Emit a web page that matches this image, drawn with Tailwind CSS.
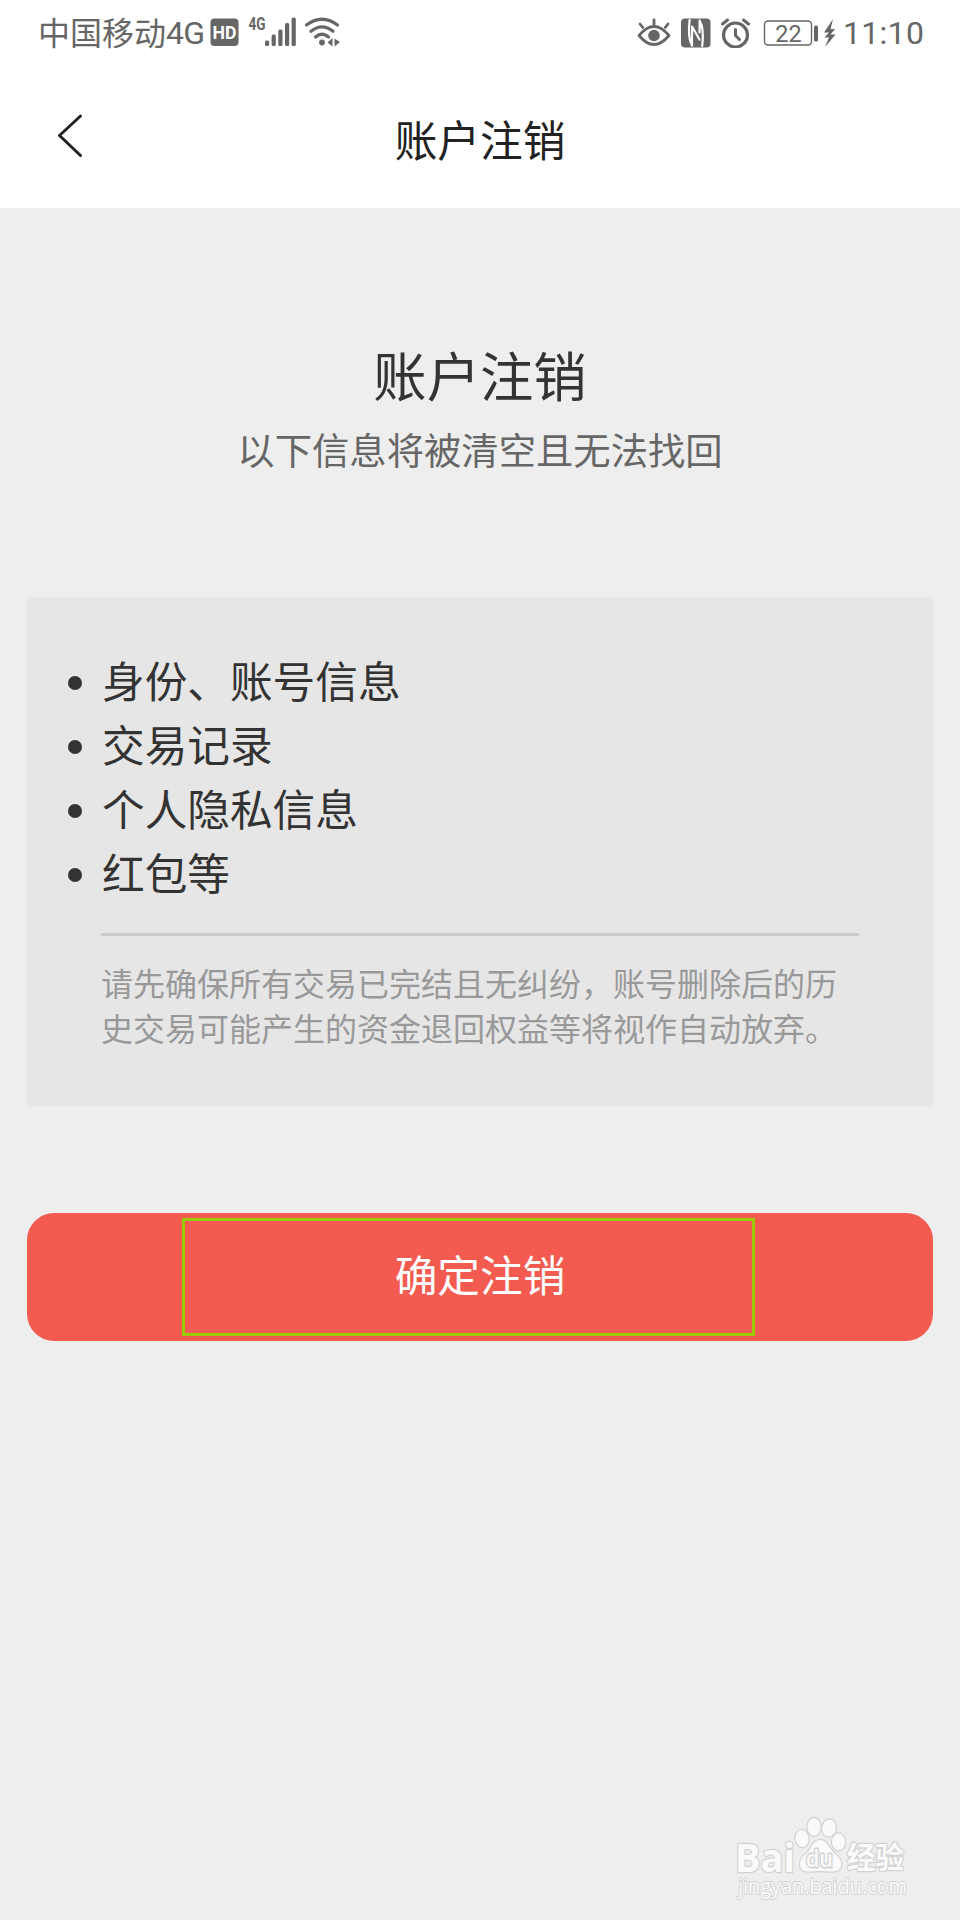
<!DOCTYPE html>
<html lang="zh-CN">
<head>
  <meta charset="UTF-8" />
  <meta name="viewport" content="width=device-width, initial-scale=1.0"/>
  <title>账户注销</title>
  <script src="https://cdn.jsdelivr.net/npm/@tailwindcss/browser@4"></script>
</head>
<body class="relative w-[960px] h-[1920px] overflow-hidden bg-[#eeeeee] text-[#333333] font-['Noto_Sans_CJK_SC',sans-serif]">

  <!-- Status bar -->
  <div class="flex items-center justify-between h-[66px] pl-[38px] pr-[38px] bg-white text-[#666666]">
    <div class="flex items-center">
      <div class="flex items-center h-[62px] pb-[3px] text-[32px] leading-[59px]">
        <span class="w-32">中国移动</span><span class="w-[39px] pt-[3px] font-['Roboto',sans-serif] tracking-[-0.8px]">4G</span>
      </div>
      <!-- HD, signal, wifi -->
      <svg class="ml-[5px] overflow-visible" width="130" height="30" viewBox="0 0 130 30" fill="#666666">
        <rect x="0.5" y="0.5" width="28" height="27.5" rx="4"/>
        <text x="2.6" y="21" font-family="Roboto" font-weight="700" font-size="18.5" fill="#fff" textLength="24" lengthAdjust="spacingAndGlyphs">HD</text>
        <text x="38.5" y="12" font-family="Roboto" font-weight="700" font-size="17.5" textLength="17" lengthAdjust="spacingAndGlyphs">4G</text>
        <rect x="55" y="22.5" width="4.2" height="5.5" rx="1.5"/>
        <rect x="61.6" y="16.5" width="4.2" height="11.5" rx="1.5"/>
        <rect x="68.3" y="11.5" width="4.2" height="16.5" rx="1.5"/>
        <rect x="75" y="5" width="4.2" height="23" rx="1.5"/>
        <rect x="81.6" y="-0.5" width="4.2" height="28.5" rx="1.5"/>
        <g fill="none" stroke="#666666" stroke-width="3.2" stroke-linecap="round">
          <path d="M96.5 7Q112 -4.5 127.5 7"/>
          <path d="M101 13.2Q112 4.5 123 13.2"/>
          <path d="M105.5 19Q112 13.5 118.5 19"/>
        </g>
        <circle cx="112" cy="24.5" r="2.9"/>
        <path d="M122.500 20V28.500L117.500 24.500ZM124.500 20.500L130 24L124.500 28.500Z"/>
      </svg>
    </div>
    <div class="flex items-center">
      <!-- eye, nfc, alarm, battery, charging -->
      <svg width="200" height="30" viewBox="0 0 200 30" fill="none" stroke="#666666" stroke-linecap="round" stroke-linejoin="round">
        <path d="M2 17.5Q17 -0.500 32 17.500Q17 35.500 2 17.500Z" stroke-width="2.800"/>
        <circle cx="17" cy="17.500" r="5.800" fill="#666666" stroke="none"/>
        <path d="M17 1.800V6.500M3 6L5.800 9.500M31 6L28.200 9.500" stroke-width="2.800"/>
        <rect x="44" y="0.500" width="29.500" height="29" rx="4" fill="#666666" stroke="none"/>
        <path d="M52.600 2Q50.500 20 55 27.500V8.500L62.500 21.500" stroke="#fff" stroke-width="2.200"/>
        <path d="M65.200 28Q67.300 10 62.600 2.500V14.500" stroke="#fff" stroke-width="2.200"/>
        <circle cx="98.500" cy="17" r="12" stroke-width="3.200"/>
        <path d="M98.500 11.500V17.500L102.500 21.500" stroke-width="3"/>
        <path d="M85.500 6L90.500 2M111.500 6L106.500 2" stroke-width="3"/>
        <rect x="127.500" y="3" width="47" height="24" rx="3.500" stroke-width="1.400"/>
        <text x="151.500" y="23.800" text-anchor="middle" font-family="Roboto" font-size="23.500" fill="#666666" stroke="none">22</text>
        <rect x="177" y="7.500" width="4" height="16" rx="1.500" fill="#666666" stroke="none"/>
        <path d="M196 1L187 14.500H192L187.500 19.500H192L188 29L198.500 16.500H193.500L198 11H193.500Z" fill="#666666" stroke="none"/>
      </svg>
      <span class="w-[79px] ml-[6px] font-['Roboto',sans-serif] text-[32px] leading-[62px] tracking-[0.3px] whitespace-nowrap">11:10</span>
    </div>
  </div>

  <!-- Header -->
  <header class="relative flex items-center justify-center h-[142px] bg-white">
    <a href="#" class="absolute left-[55px] top-[48px]">
      <svg width="28" height="44" viewBox="0 0 28 44" fill="none" stroke="#222222" stroke-width="3" stroke-linecap="round" stroke-linejoin="round">
        <path d="M25.500 2L4.500 21.500L25.500 41.500"/>
      </svg>
    </a>
    <h1 class="pt-[4px] text-[42.67px] leading-[64px] text-[#222222]">账户注销</h1>
  </header>

  <main class="px-[27px]">
    <div class="pt-[134px] text-center">
      <h2 class="text-[53.33px] leading-[64px]">账户注销</h2>
      <p class="mt-[19px] text-[37.33px] leading-[48px] text-[#666666]">以下信息将被清空且无法找回</p>
    </div>

    <section class="mt-[124px] h-[509px] pl-[74px] pr-[74px] pt-[51px] rounded bg-[#e6e6e6]">
      <ul class="-ml-[33px] text-[42.67px] leading-[64px]">
        <li class="flex items-center"><span class="size-3.5 mt-1.5 mr-[20px] rounded-full bg-[#333333]"></span>身份、账号信息</li>
        <li class="flex items-center"><span class="size-3.5 mt-1.5 mr-[20px] rounded-full bg-[#333333]"></span>交易记录</li>
        <li class="flex items-center"><span class="size-3.5 mt-1.5 mr-[20px] rounded-full bg-[#333333]"></span>个人隐私信息</li>
        <li class="flex items-center"><span class="size-3.5 mt-1.5 mr-[20px] rounded-full bg-[#333333]"></span>红包等</li>
      </ul>
      <p class="mt-[29px] pt-[24px] border-t-3 border-[#cacaca] text-[32px] leading-[45.33px] text-[#999999]">请先确保所有交易已完结且无纠纷，账号删除后的历<br>史交易可能产生的资金退回权益等将视作自动放弃。</p>
    </section>

    <div class="relative mt-[107px]">
      <button class="w-full h-32 pb-1.5 rounded-[27px] bg-[#f45b50] text-[42.67px] leading-[64px] text-white">确定注销</button>
      <div class="absolute left-[155px] top-[5px] w-[573px] h-[118px] border-3 border-[#99cc00]"></div>
    </div>
  </main>

  <!-- Watermark -->
  <svg class="absolute left-[730px] top-[1810px]" width="190" height="95" viewBox="0 0 190 95" fill="#fafafa" stroke="#d2d2d2" stroke-width="2.4" paint-order="stroke" stroke-linejoin="round">
    <text x="5" y="61.500" font-family="Open Sans" font-weight="700" font-size="40" textLength="60" lengthAdjust="spacingAndGlyphs">Bai</text>
    <ellipse cx="72" cy="28.500" rx="6.500" ry="8.500" transform="rotate(-8 72 28.500)"/>
    <ellipse cx="84" cy="17" rx="6.500" ry="9"/>
    <ellipse cx="99" cy="18" rx="6.800" ry="8.500" transform="rotate(12 99 18)"/>
    <ellipse cx="108.500" cy="32" rx="6.500" ry="8.500"/>
    <path d="M90 30C97 30 98 37 103 42C109 47 112 51 111 56C109 64 100 61 90 61C80 61 72 64 70 56C69 50 73 46 78 42C82 37 83 30 90 30Z"/>
    <text x="76" y="56.500" font-family="Open Sans" font-weight="600" font-size="24" stroke-width="3" textLength="27" lengthAdjust="spacingAndGlyphs">du</text>
    <text x="117" y="58" font-family="Noto Sans CJK SC" font-weight="700" font-size="29.500" textLength="57" lengthAdjust="spacingAndGlyphs">经验</text>
    <text x="8" y="83.500" font-family="Open Sans" font-size="21.500" stroke-width="1.800" textLength="169" lengthAdjust="spacingAndGlyphs">jingyan.baidu.com</text>
  </svg>

</body>
</html>
